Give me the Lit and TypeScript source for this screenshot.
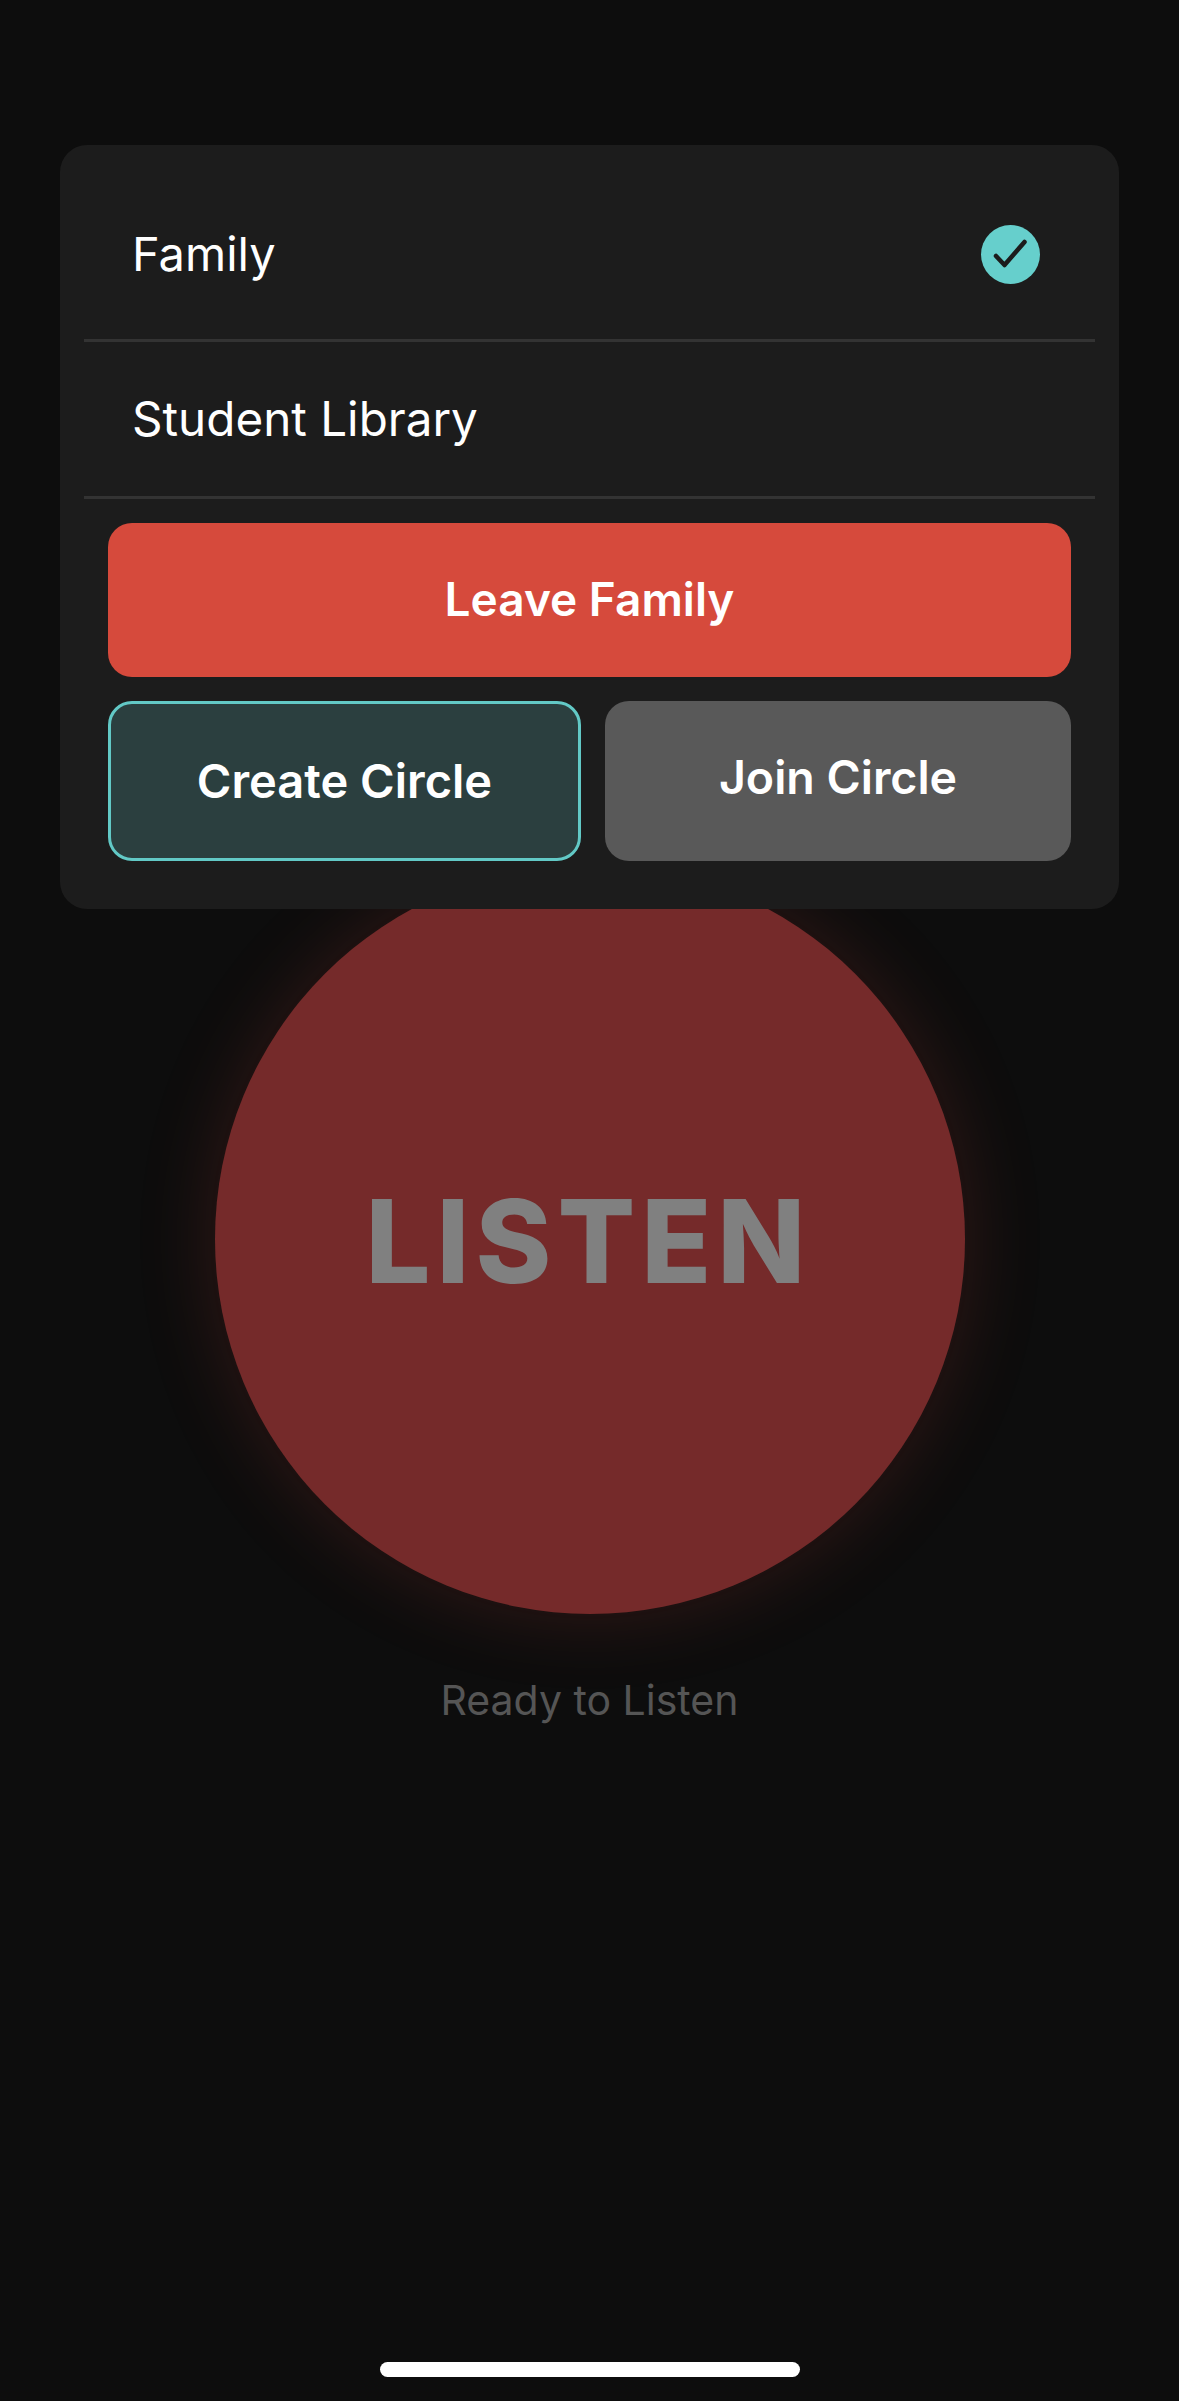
import { LitElement, html, css } from 'lit';
import { customElement } from 'lit/decorators.js';

@customElement('app-root')
export class AppRoot extends LitElement {
  static styles = css`
    :host {
      display: block;
      font-family: Inter, "Liberation Sans", sans-serif;
      color: #fff;
    }
    * {
      box-sizing: border-box;
    }
    .page {
      height: 2401px;
      overflow: hidden;
      background: #0d0d0d;
      display: flex;
      flex-direction: column;
      align-items: center;
    }
    .card {
      position: relative;
      z-index: 1;
      align-self: flex-start;
      width: 1059px;
      height: 764px;
      margin: 145px 0 0 60px;
      padding: 0 24px;
      background: #1c1c1c;
      border-radius: 27px;
    }
    .row {
      display: flex;
      align-items: center;
      justify-content: space-between;
      padding: 0 55px 0 48px;
      font-size: 47px;
      border-bottom: 3px solid #333;
    }
    .row span {
      margin-bottom: 2px;
    }
    .row.first {
      height: 197px;
      padding-top: 24px;
    }
    .row.second {
      height: 157px;
      font-size: 47.6px;
    }
    .check {
      width: 59px;
      height: 59px;
      display: block;
    }
    .actions {
      display: flex;
      flex-direction: column;
      gap: 24px;
      padding: 24px 24px 0;
    }
    .split {
      display: grid;
      grid-template-columns: 473px 466px;
      gap: 24px;
    }
    button {
      font: inherit;
      font-size: 47px;
      font-weight: 600;
      color: #fff;
      border: 0;
      padding: 0 0 2px;
      border-radius: 24px;
      display: flex;
      align-items: center;
      justify-content: center;
    }
    .leave {
      height: 154px;
      background: #d64a3c;
      font-size: 46px;
    }
    .create,
    .join {
      height: 160px;
    }
    .create {
      background: #2b3f3f;
      border: 3px solid #62c9c6;
    }
    .join {
      background: #595959;
      font-size: 46.5px;
      padding-bottom: 8px;
    }
    .listen {
      width: 750px;
      height: 750px;
      margin-top: -45px;
      padding: 5px 2px 0 0;
      border-radius: 50%;
      background: #752a2a;
      box-shadow: 0 0 80px rgba(214, 74, 60, 0.18);
      display: flex;
      align-items: center;
      justify-content: center;
      font-size: 115px;
      font-weight: 800;
      letter-spacing: 6px;
      color: #808080;
    }
    .status {
      margin-top: 61px;
      font-size: 41px;
      color: #555;
    }
    .home {
      width: 420px;
      height: 15px;
      margin-top: auto;
      margin-bottom: 24px;
      border-radius: 8px;
      background: #fff;
    }
  `;

  render() {
    return html`
      <div class="page">
        <div class="card">
          <div class="row first">
            <span>Family</span>
            <svg class="check" viewBox="0 0 59 59">
              <circle cx="29.5" cy="29.5" r="29.5" fill="#66cfcc"></circle>
              <path d="M15 31l8.5 9L43.5 17" fill="none" stroke="#1c1c1c" stroke-width="4.5" stroke-linecap="round" stroke-linejoin="round"></path>
            </svg>
          </div>
          <div class="row second"><span>Student Library</span></div>
          <div class="actions">
            <button class="leave">Leave Family</button>
            <div class="split">
              <button class="create">Create Circle</button>
              <button class="join">Join Circle</button>
            </div>
          </div>
        </div>
        <div class="listen">LISTEN</div>
        <div class="status">Ready to Listen</div>
        <div class="home"></div>
      </div>
    `;
  }
}
